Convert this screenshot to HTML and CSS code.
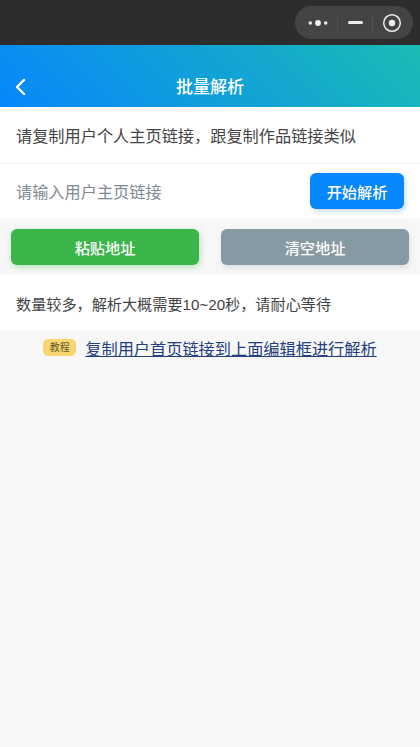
FILE: index.html
```html
<!DOCTYPE html>
<html>
<head>
  <title>批量解析</title>
  <link rel="stylesheet" href="styles.css">
</head>
<body>
  <!-- 顶部状态栏 -->
  <div class="top-bar">
    <div class="capsule">
      <svg class="capsule-more" width="20" height="8" viewBox="0 0 20 8">
        <circle cx="2.300" cy="4" r="1.800" fill="#e8e8e8"/>
        <circle cx="10" cy="4" r="2.900" fill="#f2f2f2"/>
        <circle cx="17.700" cy="4" r="1.800" fill="#e8e8e8"/>
      </svg>
      <span class="capsule-line"></span>
      <span class="capsule-min"></span>
      <span class="capsule-line"></span>
      <svg class="capsule-close" width="20" height="20" viewBox="0 0 20 20">
        <circle cx="10" cy="10" r="8.300" fill="none" stroke="#eee" stroke-width="1.500"/>
        <circle cx="10" cy="10" r="3.200" fill="#eee"/>
      </svg>
    </div>
  </div>

  <header class="nav">
    <svg class="nav-back" width="12" height="18" viewBox="0 0 12 18">
      <path d="M10 2 L3 9 L10 16" fill="none" stroke="#fff" stroke-width="2.400" stroke-linecap="round" stroke-linejoin="round"/>
    </svg>
    <h1 class="nav-title">批量解析</h1>
  </header>

  <div class="tip-row">请复制用户个人主页链接，跟复制作品链接类似</div>

  <div class="input-row">
    <span class="placeholder">请输入用户主页链接</span>
    <button class="btn btn-start">开始解析</button>
  </div>

  <div class="btn-row">
    <button class="btn btn-paste">粘贴地址</button>
    <button class="btn btn-clear">清空地址</button>
  </div>

  <div class="note-row">数量较多，解析大概需要10~20秒，请耐心等待</div>

  <div class="guide-row">
    <span class="guide-tag">教程</span>
    <a class="guide-link">复制用户首页链接到上面编辑框进行解析</a>
  </div>
</body>
</html>
```

FILE: styles.css
```css
/* 全体 */
body {
  margin: 0;
  min-height: 747px;
  background-color: #f7f7f7;
  font-family: "Liberation Sans", "Noto Sans CJK SC", sans-serif;
  color: #444;
}

/* 顶部状态栏 */
.top-bar {
  height: 45px;
  box-sizing: border-box;
  padding: 6px 7px 0 0;
  display: flex;
  justify-content: flex-end;
  background-color: #2d2d2d;
}

.capsule {
  width: 118px;
  height: 33px;
  box-sizing: border-box;
  padding: 0 11px 0 13px;
  display: flex;
  align-items: center;
  justify-content: space-between;
  background-color: #444;
  border-radius: 17px;
}

.capsule-line {
  height: 16px;
  border-left: 1px dotted #5c5c5c;
}

.capsule-min {
  width: 15px;
  height: 3px;
  background-color: #eee;
  border-radius: 2px;
}

/* 导航栏 */
.nav {
  height: 62px;
  padding-top: 18px;
  box-sizing: border-box;
  display: flex;
  align-items: center;
  justify-content: center;
  position: relative;
  background: linear-gradient(45deg, #0687fb, #1cbbb4);
}

.nav-back {
  position: absolute;
  left: 14px;
  top: 33px;
}

.nav-title {
  margin: 0;
  font-size: 17px;
  font-weight: 500;
  color: #fff;
}

/* 说明 */
.tip-row {
  height: 57px;
  box-sizing: border-box;
  padding-left: 16px;
  display: flex;
  align-items: center;
  font-size: 16.200px;
  background-color: #fff;
  border-bottom: 1px solid #f2f2f2;
}

/* 输入 */
.input-row {
  height: 54px;
  box-sizing: border-box;
  padding: 0 16px;
  display: flex;
  align-items: center;
  justify-content: space-between;
  background-color: #fff;
}

.placeholder {
  font-size: 16.200px;
  color: #7f8a93;
}

/* ボタン */
.btn {
  border: 0;
  padding: 0;
  height: 36px;
  border-radius: 6px;
  font-family: inherit;
  font-size: 15.200px;
  font-weight: 500;
  color: #fff;
}

.btn-start {
  width: 94px;
  background-color: #0687fb;
  box-shadow: 2px 3px 5px rgba(0, 102, 204, 0.2);
}

.btn-row {
  height: 57px;
  box-sizing: border-box;
  padding: 11px 11px 0;
  display: flex;
  justify-content: space-between;
}

.btn-paste,
.btn-clear {
  width: 188px;
}

.btn-paste {
  background-color: #39b54a;
  box-shadow: 1px 2px 6px rgba(57, 181, 74, 0.35);
}

.btn-clear {
  background-color: #8799a3;
  box-shadow: 1px 3px 5px rgba(114, 130, 138, 0.2);
}

/* 注意 */
.note-row {
  height: 56px;
  box-sizing: border-box;
  padding-left: 16px;
  display: flex;
  align-items: center;
  font-size: 15.150px;
  background-color: #fff;
}

/* 教程 */
.guide-row {
  height: 33px;
  display: flex;
  align-items: center;
  justify-content: center;
  gap: 9px;
}

.guide-tag {
  width: 33px;
  height: 17px;
  line-height: 17px;
  text-align: center;
  font-size: 10px;
  color: #6b5a2a;
  background-color: #f6d671;
  border-radius: 5px;
}

.guide-link {
  font-size: 16.200px;
  color: #24407f;
  text-decoration: underline;
}
```
